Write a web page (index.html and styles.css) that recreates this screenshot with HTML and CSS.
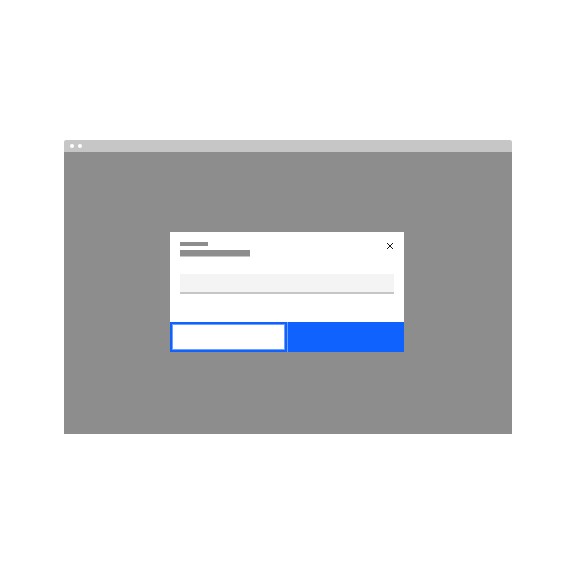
FILE: index.html
```html
<!DOCTYPE html>
<html>
<head>
<meta charset="utf-8">
<link rel="stylesheet" href="styles.css">
</head>
<body>
<div class="page">
  <div class="window">
    <div class="titlebar">
      <span class="dot"></span>
      <span class="dot"></span>
    </div>
    <div class="screen">
      <div class="dialog">
        <div class="header">
          <div class="heading">
            <div class="label-bar"></div>
            <div class="title-bar"></div>
          </div>
          <svg class="close" width="8" height="8" viewBox="0 0 8 8">
            <path d="M1 1 L7 7 M7 1 L1 7" stroke="#161616" stroke-width="1" fill="none"/>
          </svg>
        </div>
        <div class="field"></div>
        <div class="actions">
          <div class="btn secondary"></div>
          <div class="btn primary"></div>
        </div>
      </div>
    </div>
  </div>
</div>
</body>
</html>
```
FILE: styles.css
```css
html, body {
  margin: 0;
  padding: 0;
  background: #ffffff;
  font-family: "Liberation Sans", Arial, sans-serif;
}
.page {
  width: 576px;
  height: 576px;
  padding: 140px 0 0 64px;
  box-sizing: border-box;
}
.window {
  width: 448px;
  display: flex;
  flex-direction: column;
}
.titlebar {
  height: 12px;
  background: #c6c6c6;
  border-radius: 2px 2px 0 0;
  display: flex;
  align-items: center;
  gap: 4px;
  padding-left: 6px;
}
.dot {
  width: 4px;
  height: 4px;
  border-radius: 50%;
  background: #ffffff;
}
.screen {
  height: 282px;
  background: #8d8d8d;
  padding: 80px 0 0 106px;
  box-sizing: border-box;
}
.dialog {
  width: 234px;
  height: 120px;
  background: #ffffff;
  display: flex;
  flex-direction: column;
}
.header {
  display: flex;
  justify-content: space-between;
  align-items: flex-start;
  padding: 10px 10px 0 10px;
}
.heading {
  display: flex;
  flex-direction: column;
  gap: 4px;
}
.label-bar {
  width: 28px;
  height: 4px;
  background: #8d8d8d;
}
.title-bar {
  width: 70px;
  height: 6px;
  background: #8d8d8d;
  border-bottom: 1px solid #c6c6c6;
}
.close {
  margin-top: 0;
}
.field {
  margin: 17px 10px 0 10px;
  height: 18px;
  background: #f4f4f4;
  border-bottom: 2px solid #c6c6c6;
}
.actions {
  margin-top: auto;
  display: flex;
  height: 30px;
}
.btn {
  width: 117px;
  flex: none;
  box-sizing: border-box;
}
.secondary {
  background: #ffffff;
  border: 2px solid #0f62fe;
  box-shadow: inset 0 0 0 1px #6f9ffe;
}
.primary {
  background: #0f62fe;
  border-left: 1px solid #6f9ffe;
}
```
